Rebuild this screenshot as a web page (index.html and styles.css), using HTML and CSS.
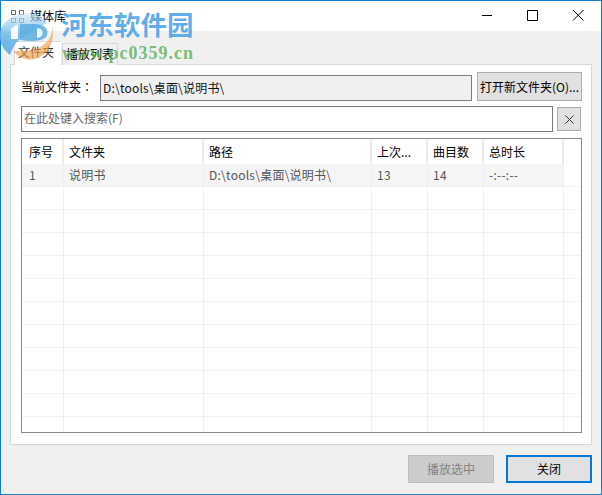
FILE: index.html
```html
<!DOCTYPE html>
<html lang="zh-CN">
<head>
<meta charset="utf-8">
<title>媒体库</title>
<link rel="stylesheet" href="styles.css">
</head>
<body>
<div class="window">
  <header class="titlebar">
    <svg class="app-icon" width="13" height="13" viewBox="0 0 13 13"><path d="M.5.5h4v4h-4zM8.500.5h4v4h-4zM.5 8.500h4v4h-4zM8.500 8.500h4v4h-4z" fill="none" stroke="#666"/></svg>
    <span class="title">媒体库</span>
    <div class="caption">
      <svg width="46" height="30" viewBox="0 0 46 30"><path d="M20 14.500h10" stroke="#000"/></svg>
      <svg width="46" height="30" viewBox="0 0 46 30"><path d="M19.500 9.500h10v10h-10z" fill="none" stroke="#000"/></svg>
      <svg width="46" height="30" viewBox="0 0 46 30"><path d="M19 9l10.500 10.500M29.500 9L19 19.500" stroke="#000" fill="none"/></svg>
    </div>
  </header>
  <main class="body">
    <nav class="tabs">
      <span class="tab active">文件夹</span>
      <span class="tab">播放列表</span>
    </nav>
    <section class="panel">
      <div class="row folder-row">
        <span class="label" lang="zh-TW">当前文件夹：</span>
        <div class="field readonly">D:\tools\桌面\说明书\</div>
        <button class="btn open">打开新文件夹(O)...</button>
      </div>
      <div class="row search-row">
        <div class="field search">在此处键入搜索(F)</div>
        <button class="btn clear"><svg width="9" height="9" viewBox="0 0 9 9"><path d="M.5.500l8 8M8.500.500l-8 8" stroke="#333" fill="none"/></svg></button>
      </div>
      <div class="grid">
        <table>
          <colgroup><col class="c1"><col class="c2"><col class="c3"><col class="c4"><col class="c5"><col class="c6"><col></colgroup>
          <thead><tr><th>序号</th><th>文件夹</th><th>路径</th><th>上次...</th><th>曲目数</th><th>总时长</th><th></th></tr></thead>
          <tbody>
            <tr class="selected"><td>1</td><td>说明书</td><td>D:\tools\桌面\说明书\</td><td>13</td><td>14</td><td>-:--:--</td><td class="blank"></td></tr>
            <tr><td></td><td></td><td></td><td></td><td></td><td></td><td></td></tr>
            <tr><td></td><td></td><td></td><td></td><td></td><td></td><td></td></tr>
            <tr><td></td><td></td><td></td><td></td><td></td><td></td><td></td></tr>
            <tr><td></td><td></td><td></td><td></td><td></td><td></td><td></td></tr>
            <tr><td></td><td></td><td></td><td></td><td></td><td></td><td></td></tr>
            <tr><td></td><td></td><td></td><td></td><td></td><td></td><td></td></tr>
            <tr><td></td><td></td><td></td><td></td><td></td><td></td><td></td></tr>
            <tr><td></td><td></td><td></td><td></td><td></td><td></td><td></td></tr>
            <tr><td></td><td></td><td></td><td></td><td></td><td></td><td></td></tr>
            <tr><td></td><td></td><td></td><td></td><td></td><td></td><td></td></tr>
            <tr class="last"><td></td><td></td><td></td><td></td><td></td><td></td><td></td></tr>
          </tbody>
        </table>
      </div>
    </section>
    <footer class="footer">
      <button class="btn action" disabled>播放选中</button>
      <button class="btn action primary">关闭</button>
    </footer>
  </main>
  <div class="watermark">
    <svg class="wm-logo" width="62" height="52" viewBox="0 0 62 52">
      <defs>
        <linearGradient id="disc" x1="0" y1="0" x2="0" y2="1">
          <stop offset="0" stop-color="#cfe8f8" stop-opacity=".6"/>
          <stop offset=".5" stop-color="#6db8e8" stop-opacity=".85"/>
          <stop offset="1" stop-color="#4aa3df" stop-opacity=".85"/>
        </linearGradient>
      </defs>
      <path d="M28 2C12 2 0 12 0 25c0 8 4 14 10 19 2-6 5-12 10-16L47 12C42 6 36 2 28 2z" fill="url(#disc)"/>
      <path d="M10 18l8-5v15h-7v-9z" fill="#fff" fill-opacity=".9"/>
      <path d="M20 13h14c12 0 16 7 12 13-4 4-14 5-26 3z" fill="#5aaee3" fill-opacity=".85"/>
      <path d="M37 17c5 0 7 4 5 7-1 2-3 3-5 3z" fill="#fff" fill-opacity=".9"/>
      <path d="M52 14c2 12-6 20-16 24-7 2-15 2-23 2 6 7 14 10 22 8 13-3 21-18 17-34z" fill="#f0a048" fill-opacity=".65"/>
    </svg>
    <span class="wm-cn">河东软件园</span>
    <span class="wm-en">www.pc0359.cn</span>
  </div>
</div>
</body>
</html>
```
FILE: styles.css
```css
* { box-sizing: border-box; }
html, body { margin: 0; padding: 0; }
body {
  width: 602px;
  height: 495px;
  overflow: hidden;
  font: 12px/16px "Noto Sans CJK SC", "Liberation Sans", sans-serif;
  color: #000;
}
.window {
  position: relative;
  width: 602px;
  height: 495px;
  display: flex;
  flex-direction: column;
  border: 1px solid #0f7fd6;
  background: #f0f0f0;
}
.titlebar {
  height: 30px;
  flex: none;
  display: flex;
  align-items: center;
  padding-left: 10px;
  background: #fff;
}
.app-icon { margin-right: 6px; }
.title { font-size: 12px; padding-bottom: 1px; }
.caption { margin-left: auto; display: flex; margin-right: 1px; }
.caption svg { display: block; }
.body {
  flex: 1;
  display: flex;
  flex-direction: column;
  padding: 9px 9px 0;
  min-height: 0;
}
.tabs {
  display: flex;
  align-items: flex-end;
  height: 25px;
  padding-left: 4px;
  margin-bottom: -1px;
  position: relative;
  z-index: 1;
  flex: none;
}
.tab {
  height: 22px;
  width: 56px;
  border: 1px solid #d9d9d9;
  border-bottom: none;
  text-align: center;
  line-height: 20px;
  background: #f0f0f0;
}
.tab.active {
  height: 24px;
  width: 47px;
  background: #fff;
  color: #333;
  border-right: none;
  margin-right: 1px;
  line-height: 20px;
  text-align: left;
  padding-left: 3px;
}
.panel {
  width: 582px;
  height: 381px;
  flex: none;
  background: #fff;
  border: 1px solid #d9d9d9;
  padding: 7px 9px 0 10px;
}
.row { display: flex; }
.folder-row { height: 29px; align-items: flex-end; }
.label {
  width: 79px;
  flex: none;
  align-self: center;
  font-family: "Noto Sans CJK TC", "Liberation Sans", sans-serif;
}
.field {
  border: 1px solid #7a7a7a;
  height: 26px;
  line-height: 22px;
  padding-left: 2px;
}
.readonly { width: 372px; background: #f0f0f0; color: #111; letter-spacing: .2px; line-height: 24px; }
.btn {
  font: inherit;
  background: #e1e1e1;
  border: 1px solid #adadad;
  color: #000;
  padding: 0;
}
.open { width: 105px; height: 29px; margin-left: 5px; white-space: nowrap; flex: none; }
.search-row { margin-top: 5px; height: 26px; align-items: flex-start; }
.search { width: 532px; color: #666; flex: none; }
.clear {
  width: 24px;
  height: 24px;
  margin: 1px 0 0 4px;
  display: flex;
  align-items: center;
  justify-content: center;
  flex: none;
}
.grid {
  margin-top: 6px;
  width: 561px;
  height: 295px;
  border: 1px solid #828790;
  overflow: hidden;
}
table {
  border-collapse: separate;
  border-spacing: 0;
  table-layout: fixed;
  width: 558px;
}
.c1 { width: 42px; }
.c2 { width: 140px; }
.c3 { width: 168px; }
.c4, .c5 { width: 56px; }
.c6 { width: 80px; }
th, td {
  padding: 0 0 0 5px;
  font-weight: 400;
  text-align: left;
  white-space: nowrap;
}
th:first-child, td:first-child { padding-left: 7px; }
th {
  height: 25px;
  border-right: 2px solid #ececec;
}
th:last-child { border-right: none; }
td {
  height: 23px;
  border-right: 1px solid #f0f0f0;
  border-bottom: 1px solid #f0f0f0;
  color: #555;
  letter-spacing: .25px;
}
td:last-child { border-right: none; }
.selected td { background: #f5f5f5; }
.selected td.blank { background: #fff; }
.last td { height: 15px; border-bottom: none; }
.footer {
  display: flex;
  justify-content: flex-end;
  gap: 12px;
  padding-top: 10px;
}
.action { width: 86px; height: 28px; }
.action:disabled { background: #ccc; border-color: #bfbfbf; color: #838383; }
.primary { border: 2px solid #0078d7; }
.watermark {
  position: absolute;
  left: -1px;
  top: -1px;
  width: 200px;
  height: 70px;
  pointer-events: none;
  z-index: 2;
}
.wm-logo { position: absolute; left: 0; top: 11px; }
.wm-cn {
  position: absolute;
  left: 61px;
  top: 6px;
  font: 700 26.500px/36px "Noto Sans CJK SC", sans-serif;
  color: rgba(70, 160, 232, .85);
  white-space: nowrap;
}
.wm-en {
  position: absolute;
  left: 62px;
  top: 42px;
  font: 700 18px/22px "Liberation Serif", serif;
  letter-spacing: 1px;
  color: rgba(90, 175, 85, .8);
  white-space: nowrap;
}
```
